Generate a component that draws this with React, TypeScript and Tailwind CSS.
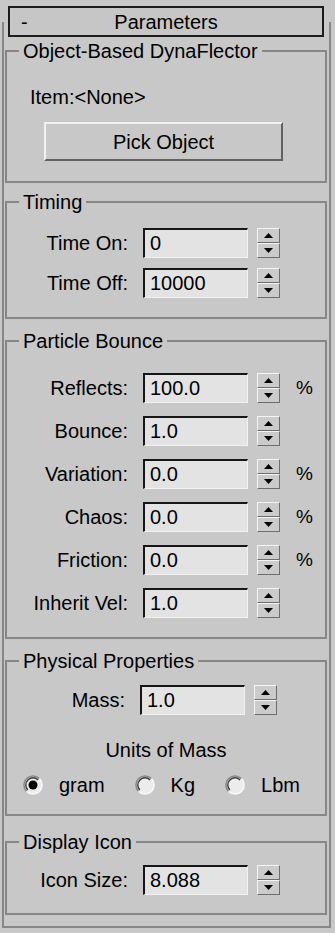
import React from 'react';

const FONT = { fontFamily: '"Liberation Sans", Arial, sans-serif' };

const Spinner = () => (
  <div className="flex flex-col w-[23px] h-[30px] shrink-0">
    <div className="h-[15px] flex items-center justify-center bg-[#cbcbcb] border-t border-l border-[#f4f4f4] border-b border-r border-b-[#6e6e6e] border-r-[#6e6e6e]">
      <svg width="9" height="5" viewBox="0 0 9 5">
        <path d="M0 5 L4.5 0 L9 5 Z" fill="#000" />
      </svg>
    </div>
    <div className="h-[15px] flex items-center justify-center bg-[#cbcbcb] border-t border-l border-[#f4f4f4] border-b border-r border-b-[#6e6e6e] border-r-[#6e6e6e]">
      <svg width="9" height="5" viewBox="0 0 9 5">
        <path d="M0 0 L9 0 L4.5 5 Z" fill="#000" />
      </svg>
    </div>
  </div>
);

const Field = ({ value }: { value: string }) => (
  <div className="w-[105px] h-[30px] shrink-0 bg-[#e3e3e3] border-t-2 border-l-2 border-[#161616] border-b border-r border-b-[#f2f2f2] border-r-[#f2f2f2] pl-[5px] pb-[2px] flex items-center text-[20px] leading-none text-black">
    {value}
  </div>
);

const SpinRow = ({ label, value, pct }: { label: string; value: string; pct?: boolean }) => (
  <div className="flex items-center h-[30px]">
    <div className="w-[121px] text-right text-[20px] leading-[24px] text-black">{label}</div>
    <div className="ml-[15px]">
      <Field value={value} />
    </div>
    <div className="ml-[9px]">
      <Spinner />
    </div>
    {pct && <div className="ml-[16px] text-[19px] leading-[24px] text-black">%</div>}
  </div>
);

const Group = ({
  title,
  className,
  children,
}: {
  title: string;
  className: string;
  children: React.ReactNode;
}) => (
  <div className={`relative ml-[1px] w-[322px] border-2 border-[#878787] ${className}`}>
    <div className="absolute left-[12px] top-[-13px] bg-[#c8c8c8] px-[4px] text-[20px] leading-[24px] text-black whitespace-nowrap">
      {title}
    </div>
    {children}
  </div>
);

const Radio = ({ label, checked }: { label: string; checked?: boolean }) => (
  <div className="flex items-center gap-[16px]">
    <svg width="20" height="20" viewBox="0 0 20 20">
      <circle cx="10" cy="10" r="9" fill="#ececec" />
      <path d="M3.6 16.4 A9 9 0 0 1 16.4 3.6" stroke="#8a8a8a" strokeWidth="1.6" fill="none" />
      <path d="M4.9 15.1 A7.2 7.2 0 0 1 15.1 4.9" stroke="#3c3c3c" strokeWidth="1.4" fill="none" />
      <path d="M16.4 3.6 A9 9 0 0 1 3.6 16.4" stroke="#f8f8f8" strokeWidth="1.6" fill="none" />
      {checked && <circle cx="10" cy="10" r="4.5" fill="#000" />}
    </svg>
    <span className="text-[20px] leading-[24px] text-black">{label}</span>
  </div>
);

export default function App() {
  return (
    <div className="w-[335px] h-[933px] bg-[#c8c8c8] pt-[6px] overflow-hidden" style={FONT}>
      <div className="relative ml-[8px] w-[316px] h-[31px] border-2 border-[#1c1c1c] bg-[#c6c6c6] flex items-center justify-center">
        <span className="absolute left-[11px] top-[2px] text-[20px] leading-[24px] text-black">-</span>
        <span className="text-[20px] leading-[24px] text-black">Parameters</span>
      </div>

      <div className="-mt-[15px] ml-[2px] w-[329px] h-[906px] border-l-2 border-r-2 border-b-2 border-[#878787] pt-[28px]">
        <Group title="Object-Based DynaFlector" className="h-[133px]">
          <div className="mt-[33px] pl-[23px] text-[20px] leading-[24px] text-black">Item:&lt;None&gt;</div>
          <button className="mt-[13px] ml-[37px] w-[239px] h-[39px] bg-[#c8c8c8] border-t-2 border-l-2 border-[#f2f2f2] border-b-2 border-r-2 border-b-[#616161] border-r-[#616161] text-[20px] leading-none text-black flex items-center justify-center">
            Pick Object
          </button>
        </Group>

        <Group title="Timing" className="mt-[18px] h-[118px]">
          <div className="mt-[25px] flex flex-col gap-[10px]">
            <SpinRow label="Time On:" value="0" />
            <SpinRow label="Time Off:" value="10000" />
          </div>
        </Group>

        <Group title="Particle Bounce" className="mt-[21px] h-[299px]">
          <div className="mt-[31px] flex flex-col gap-[13px]">
            <SpinRow label="Reflects:" value="100.0" pct />
            <SpinRow label="Bounce:" value="1.0" />
            <SpinRow label="Variation:" value="0.0" pct />
            <SpinRow label="Chaos:" value="0.0" pct />
            <SpinRow label="Friction:" value="0.0" pct />
            <SpinRow label="Inherit Vel:" value="1.0" />
          </div>
        </Group>

        <Group title="Physical Properties" className="mt-[21px] h-[156px]">
          <div className="mt-[23px] -ml-[3px]">
            <SpinRow label="Mass:" value="1.0" />
          </div>
          <div className="mt-[23px] text-center text-[20px] leading-[24px] text-black">Units of Mass</div>
          <div className="mt-[11px] ml-[16px] flex items-center gap-[30px]">
            <Radio label="gram" checked />
            <Radio label="Kg" />
            <Radio label="Lbm" />
          </div>
        </Group>

        <Group title="Display Icon" className="mt-[25px] h-[74px]">
          <div className="mt-[22px]">
            <SpinRow label="Icon Size:" value="8.088" />
          </div>
        </Group>
      </div>
    </div>
  );
}
